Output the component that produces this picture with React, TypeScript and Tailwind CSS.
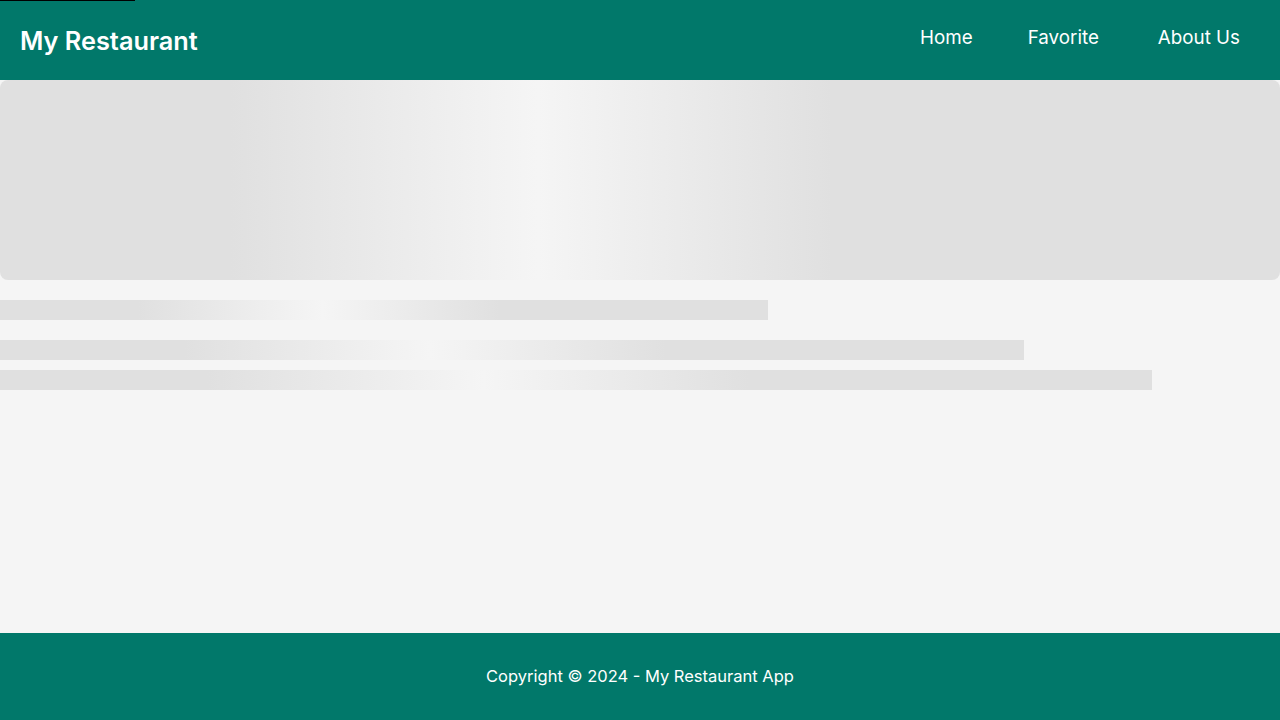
const shimmer =
  "bg-[linear-gradient(90deg,#e0e0e0_18%,#f5f5f5_42%,#e0e0e0_65%)]";

export default function App() {
  return (
    <div
      className="relative flex min-h-screen flex-col bg-[#f5f5f5]"
      style={{ fontFamily: "Inter, 'Open Sans', sans-serif" }}
    >
      {/* skip link sliver */}
      <div className="absolute left-0 top-0 h-px w-[135px] bg-black" />

      <header className="flex h-20 items-center justify-between bg-[#01786a] pl-5 pr-10 text-white">
        <h1 className="pt-0.5 text-[25.3px] font-semibold">My Restaurant</h1>
        <nav className="-mt-1 flex text-[18.8px]">
          <a href="#" className="mr-[55px]">Home</a>
          <a href="#" className="mr-[59px]">Favorite</a>
          <a href="#">About Us</a>
        </nav>
      </header>

      <main className="flex-1">
        <div className={`h-[200px] w-full rounded-lg ${shimmer}`} />
        <div className={`mt-5 h-5 w-[60%] ${shimmer}`} />
        <div className={`mt-5 h-5 w-[80%] ${shimmer}`} />
        <div className={`mt-2.5 h-5 w-[90%] ${shimmer}`} />
      </main>

      <footer className="flex h-[87px] items-center justify-center bg-[#01786a] text-[16.5px] text-white">
        <p>Copyright © 2024 - My Restaurant App</p>
      </footer>
    </div>
  );
}
